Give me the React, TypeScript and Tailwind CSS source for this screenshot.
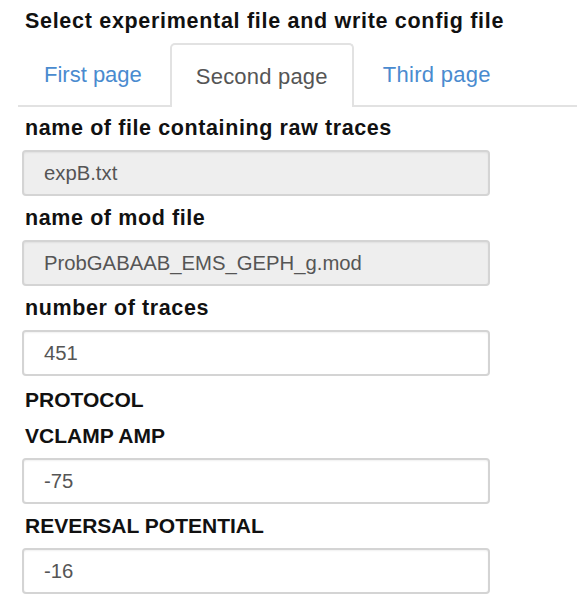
import React from "react";

const Field = ({
  label,
  value,
  disabled,
  upper,
}: {
  label: string;
  value: string;
  disabled?: boolean;
  upper?: boolean;
}) => (
  <div className="flex flex-col">
    <label
      className={`ml-[3px] font-bold leading-[28px] text-[#111] ${
        upper ? "text-[21px]" : "text-[21.5px] tracking-[0.6px]"
      }`}
    >
      {label}
    </label>
    <div
      className={`mt-2 flex h-[46px] w-[468px] items-center rounded-[4px] border-2 border-[#d4d4d4] pl-[20px] text-[20.3px] text-[#555] shadow-[inset_0_1px_2px_rgba(0,0,0,0.06)] ${
        disabled ? "bg-[#eeeeee]" : "bg-white"
      }`}
    >
      {value}
    </div>
  </div>
);

export default function App() {
  return (
    <div
      className="h-[611px] w-[577px] overflow-hidden bg-white"
      style={{ fontFamily: '"Liberation Sans", Arial, sans-serif' }}
    >
      {/* title */}
      <h3 className="pl-[25px] pt-[7px] text-[21.5px] font-bold leading-[28px] tracking-[0.7px] text-[#111]">
        Select experimental file and write config file
      </h3>

      {/* tabs */}
      <div className="ml-[18px] mt-[8px] flex h-[64px] items-stretch border-b-2 border-[#e2e2e2]">
        <div className="mr-[2px] flex cursor-pointer items-center px-[26px] text-[22px] text-[#4a8bcf]">
          First page
        </div>
        <div className="mb-[-2px] mr-[2px] flex items-center rounded-t-[5px] border-2 border-b-0 border-[#e2e2e2] bg-white px-[24px] text-[22px] tracking-[0.2px] text-[#555]">
          Second page
        </div>
        <div className="flex cursor-pointer items-center px-[27px] text-[22px] tracking-[0.3px] text-[#4a8bcf]">
          Third page
        </div>
      </div>

      {/* form */}
      <div className="flex flex-col gap-2 pl-[22px] pt-[7px]">
        <Field label="name of file containing raw traces" value="expB.txt" disabled />
        <Field label="name of mod file" value="ProbGABAAB_EMS_GEPH_g.mod" disabled />
        <Field label="number of traces" value="451" />
        <div className="ml-[3px] mt-[2px] text-[21px] font-bold leading-[28px] text-[#111]">
          PROTOCOL
        </div>
        <Field label="VCLAMP AMP" value="-75" upper />
        <Field label="REVERSAL POTENTIAL" value="-16" upper />
      </div>
    </div>
  );
}
